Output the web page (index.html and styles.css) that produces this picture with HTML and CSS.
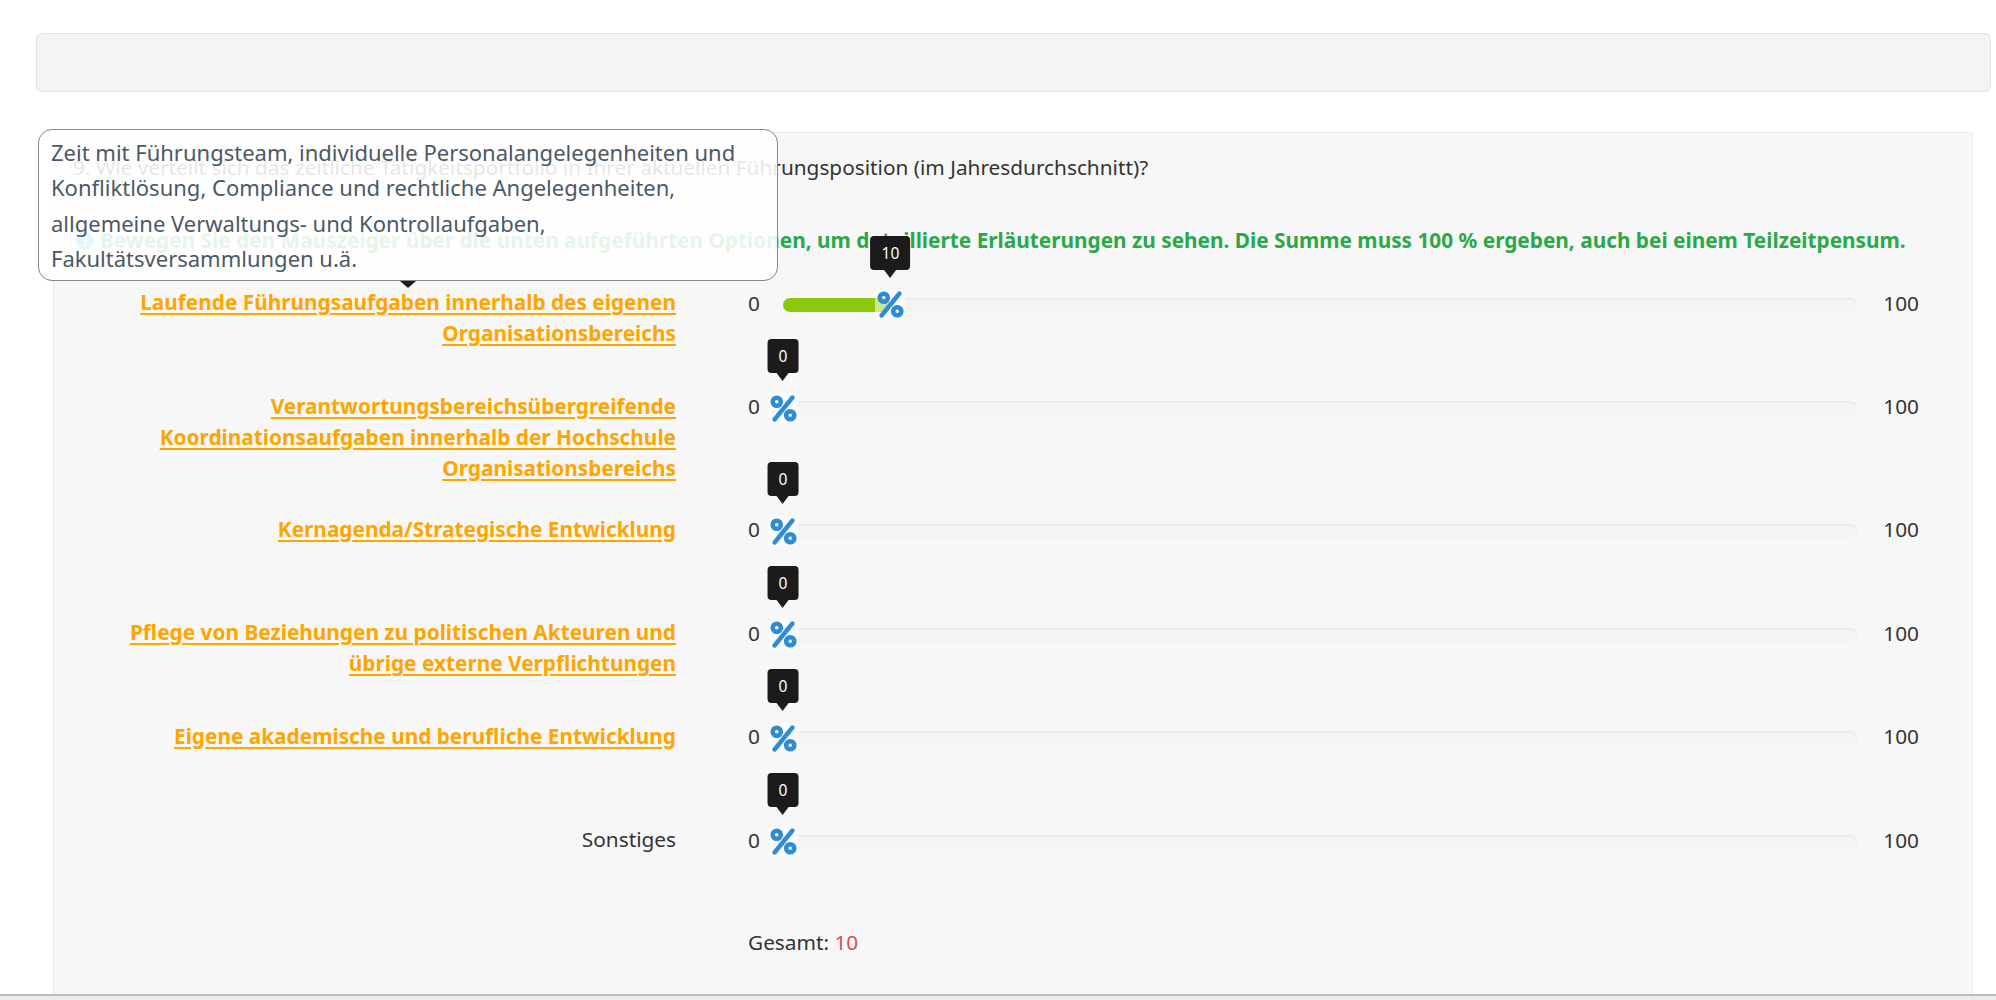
FILE: index.html
```html
<!DOCTYPE html>
<html lang="de">
<head>
<meta charset="utf-8">
<title>Tätigkeitsportfolio</title>
<link rel="stylesheet" href="styles.css">
</head>
<body>
<div class="page">
  <div class="topbar"></div>

  <section class="panel">
    <p class="qtext">9. Wie verteilt sich das zeitliche Tätigkeitsportfolio in Ihrer aktuellen Führungsposition (im Jahresdurchschnitt)?</p>
    <p class="hint"><span class="hint-icon">?</span>Bewegen Sie den Mauszeiger über die unten aufgeführten Optionen, um detaillierte Erläuterungen zu sehen. Die Summe muss 100 % ergeben, auch bei einem Teilzeitpensum.</p>

    <div class="rows">
      <div class="row">
        <a class="label" href="#">Laufende Führungsaufgaben innerhalb des eigenen Organisationsbereichs</a>
        <div class="slider">
          <span class="min">0</span>
          <div class="track">
            <div class="fill" style="width:10%"></div>
            <div class="handle" style="left:10%"><span class="bubble">10</span><svg class="pct" viewBox="0 0 26 26"><circle cx="6.5" cy="6.5" r="3.9"/><circle cx="19.5" cy="19.5" r="3.9"/><line x1="4.5" y1="23.5" x2="21.5" y2="2.5"/></svg></div>
          </div>
          <span class="max">100</span>
        </div>
      </div>

      <div class="row">
        <a class="label" href="#">Verantwortungsbereichsübergreifende Koordinationsaufgaben innerhalb der Hochschule Organisationsbereichs</a>
        <div class="slider">
          <span class="min">0</span>
          <div class="track">
            <div class="handle" style="left:0%"><span class="bubble">0</span><svg class="pct" viewBox="0 0 26 26"><circle cx="6.5" cy="6.5" r="3.9"/><circle cx="19.5" cy="19.5" r="3.9"/><line x1="4.5" y1="23.5" x2="21.5" y2="2.5"/></svg></div>
          </div>
          <span class="max">100</span>
        </div>
      </div>

      <div class="row">
        <a class="label" href="#">Kernagenda/Strategische Entwicklung</a>
        <div class="slider">
          <span class="min">0</span>
          <div class="track">
            <div class="handle" style="left:0%"><span class="bubble">0</span><svg class="pct" viewBox="0 0 26 26"><circle cx="6.5" cy="6.5" r="3.9"/><circle cx="19.5" cy="19.5" r="3.9"/><line x1="4.5" y1="23.5" x2="21.5" y2="2.5"/></svg></div>
          </div>
          <span class="max">100</span>
        </div>
      </div>

      <div class="row">
        <a class="label" href="#">Pflege von Beziehungen zu politischen Akteuren und übrige externe Verpflichtungen</a>
        <div class="slider">
          <span class="min">0</span>
          <div class="track">
            <div class="handle" style="left:0%"><span class="bubble">0</span><svg class="pct" viewBox="0 0 26 26"><circle cx="6.5" cy="6.5" r="3.9"/><circle cx="19.5" cy="19.5" r="3.9"/><line x1="4.5" y1="23.5" x2="21.5" y2="2.5"/></svg></div>
          </div>
          <span class="max">100</span>
        </div>
      </div>

      <div class="row">
        <a class="label" href="#">Eigene akademische und berufliche Entwicklung</a>
        <div class="slider">
          <span class="min">0</span>
          <div class="track">
            <div class="handle" style="left:0%"><span class="bubble">0</span><svg class="pct" viewBox="0 0 26 26"><circle cx="6.5" cy="6.5" r="3.9"/><circle cx="19.5" cy="19.5" r="3.9"/><line x1="4.5" y1="23.5" x2="21.5" y2="2.5"/></svg></div>
          </div>
          <span class="max">100</span>
        </div>
      </div>

      <div class="row">
        <span class="label plain">Sonstiges</span>
        <div class="slider">
          <span class="min">0</span>
          <div class="track">
            <div class="handle" style="left:0%"><span class="bubble">0</span><svg class="pct" viewBox="0 0 26 26"><circle cx="6.5" cy="6.5" r="3.9"/><circle cx="19.5" cy="19.5" r="3.9"/><line x1="4.5" y1="23.5" x2="21.5" y2="2.5"/></svg></div>
          </div>
          <span class="max">100</span>
        </div>
      </div>
    </div>

    <div class="total">Gesamt: <span class="total-value">10</span></div>
  </section>

  <div class="tip">Zeit mit Führungsteam, individuelle Personalangelegenheiten und Konfliktlösung, Compliance und rechtliche Angelegenheiten, allgemeine Verwaltungs- und Kontrollaufgaben, Fakultätsversammlungen u.ä.</div>
</div>
<div class="statusbar"></div>
</body>
</html>
```
FILE: styles.css
```css
html, body {
  margin: 0;
  background: #fff;
}

body {
  font-family: "Noto Sans", "Open Sans", sans-serif;
  font-size: 20.8px;
  color: #333;
}

.page {
  position: relative;
  padding: 33px 5px 0 36px;
}

/* empty toolbar strip at the top */
.topbar {
  height: 57px;
  background: #f4f4f4;
  border: 1px solid #e3e3e3;
  border-radius: 6px;
}

/* question panel */
.panel {
  margin: 40px 18px 0 17px;
  padding: 19px 19px 80px;
  background: #f7f7f7;
  border: 1px solid #ececec;
}

.qtext {
  margin: 0;
  line-height: 31px;
}

.hint {
  margin: 42px 0 0;
  padding-left: 3px;
  display: flex;
  align-items: center;
  gap: 6px;
  line-height: 31px;
  font-weight: 700;
  color: #2ba84a;
}

.hint-icon {
  flex: none;
  width: 18px;
  height: 18px;
  border-radius: 50%;
  background: #2fb2e0;
  color: #fff;
  font-size: 14px;
  line-height: 18px;
  text-align: center;
}

.rows {
  margin-top: 16px;
}

.row {
  display: grid;
  grid-template-columns: 603px 1171px;
  column-gap: 72px;
  align-items: start;
  box-sizing: border-box;
  min-height: 103.6px;
  padding: 15px 0;
}

.label {
  text-align: right;
  line-height: 31px;
  font-weight: 700;
  color: #ffa500;
  text-decoration: underline;
  text-decoration-thickness: 2px;
  text-underline-offset: 3px;
}

.label.plain {
  font-weight: 400;
  color: #333;
  text-decoration: none;
}

.slider {
  display: flex;
  align-items: center;
  height: 31px;
}

.min {
  width: 12px;
}

.track {
  position: relative;
  flex: 1;
  height: 14px;
  margin: 4px 26px 0 23px;
  border-radius: 7px;
  background: #f4f4f4;
  box-shadow: inset 0 1px 2px rgba(0, 0, 0, 0.07);
}

.fill {
  position: absolute;
  left: 0;
  top: 0;
  bottom: 0;
  border-radius: 7px;
  background: #8dc90b;
}

.handle {
  position: absolute;
  top: 50%;
  width: 30px;
  height: 30px;
  margin: -15px 0 0 -15px;
  display: flex;
  align-items: center;
  justify-content: center;
  background: rgba(255, 255, 255, 0.55);
}

.pct {
  width: 27px;
  height: 27px;
  fill: none;
  stroke: #2e8bd6;
  stroke-width: 4.4;
  stroke-linecap: round;
}

/* value tooltip above the handle */
.bubble {
  position: absolute;
  left: 50%;
  bottom: 100%;
  margin-bottom: 20px;
  transform: translateX(-50%);
  padding: 6px 11px;
  border-radius: 4px;
  background: #1b1b1b;
  color: #fff;
  font-size: 15.6px;
  line-height: 22px;
  white-space: nowrap;
}

.bubble::after {
  content: "";
  position: absolute;
  left: 50%;
  top: 100%;
  margin-left: -6px;
  border: 6px solid transparent;
  border-top: 8px solid #1b1b1b;
  border-bottom: 0;
}

.total {
  margin-top: 14px;
  padding-left: 675px;
  line-height: 31px;
}

.total-value {
  color: #e2485a;
}

/* hover explanation for the first option */
.tip {
  position: absolute;
  left: 38px;
  top: 129px;
  width: 740px;
  box-sizing: border-box;
  padding: 5px 12px 4px;
  border: 1px solid #7b8895;
  border-radius: 14px;
  background: rgba(255, 255, 255, 0.88);
  color: #4b5967;
  font-size: 22px;
  line-height: 35.3px;
}

.tip::after {
  content: "";
  position: absolute;
  left: 361px;
  top: 100%;
  margin-top: 1px;
  border: 8px solid transparent;
  border-top: 7px solid #1b1b1b;
  border-bottom: 0;
}

.statusbar {
  position: fixed;
  left: 0;
  right: 0;
  bottom: 0;
  height: 4px;
  border-top: 2px solid #bcbcbc;
  background: #ececec;
}
```
